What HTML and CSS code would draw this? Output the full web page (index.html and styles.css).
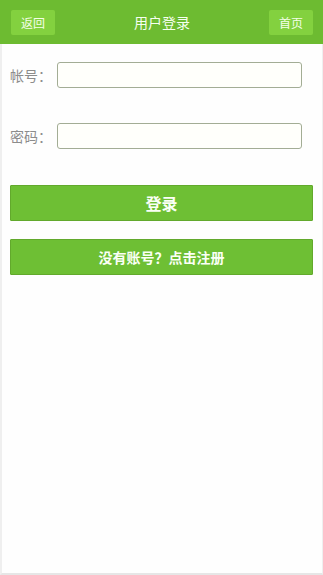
FILE: index.html
```html
<!DOCTYPE html>
<html lang="zh">
<head>
<meta charset="utf-8">
<title>用户登录</title>
<link rel="stylesheet" href="styles.css">
</head>
<body>
<div class="page">
  <header class="topbar">
    <a class="nav-btn">返回</a>
    <h1 class="title">用户登录</h1>
    <a class="nav-btn">首页</a>
  </header>
  <form class="login-form">
    <div class="field">
      <label class="field-label">帐号：</label>
      <input class="field-input" type="text">
    </div>
    <div class="field">
      <label class="field-label">密码：</label>
      <input class="field-input" type="password">
    </div>
    <div class="actions">
      <button type="button" class="btn btn-login">登录</button>
      <button type="button" class="btn btn-register">没有账号？点击注册</button>
    </div>
  </form>
</div>
</body>
</html>
```

FILE: styles.css
```css
html, body {
  margin: 0;
  padding: 0;
  background: #fff;
  font-family: "Noto Sans CJK SC", "Noto Sans", sans-serif;
}
.page {
  box-sizing: border-box;
  width: 323px;
  height: 575px;
  border-left: 2px solid #efefef;
  border-right: 1px solid #efefef;
  border-bottom: 2px solid #e6e6e6;
  background: #fefefe;
}
.topbar {
  height: 44px;
  margin-left: -2px;
  margin-right: -1px;
  background: #6dbb31;
  display: flex;
  align-items: center;
  padding: 0 10px 0 11px;
  box-sizing: border-box;
}
.nav-btn {
  width: 44px;
  height: 25px;
  background: #83d13f;
  color: #f4ffe8;
  font-size: 12px;
  line-height: 25px;
  text-align: center;
  border-radius: 2px;
}
.title {
  flex: 1;
  margin: 0;
  text-align: center;
  color: #f6fff0;
  font-size: 14px;
  font-weight: normal;
}
.login-form {
  padding: 18px 0 0 8px;
  display: flex;
  flex-direction: column;
}
.field {
  display: flex;
  align-items: center;
  height: 26px;
  padding-right: 20px;
}
.field + .field {
  margin-top: 35px;
}
.field-label {
  width: 47px;
  font-size: 14px;
  color: #8c8c8c;
}
.field-input {
  flex: 1;
  height: 26px;
  box-sizing: border-box;
  border: 1px solid #a3ad95;
  border-radius: 3px;
  background: #fffffb;
  margin: 0;
  padding: 0 4px;
}
.actions {
  margin-top: 36px;
  padding-right: 9px;
  display: flex;
  flex-direction: column;
  gap: 18px;
}
.btn {
  height: 36px;
  margin: 0;
  border: 1px solid #62a92c;
  background: #6ebf34;
  color: #fbfff6;
  font-family: "Noto Sans CJK SC", "Noto Sans", sans-serif;
  font-weight: bold;
  border-radius: 1px;
  cursor: pointer;
}
.btn-login {
  font-size: 16px;
}
.btn-register {
  font-size: 14px;
}
```
